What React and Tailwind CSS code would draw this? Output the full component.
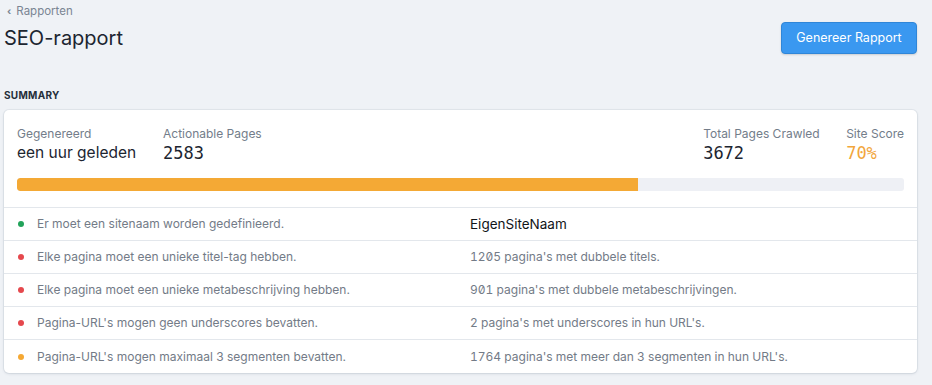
import React from "react";

const rows = [
  { dot: "bg-[#22a35a]", text: "Er moet een sitenaam worden gedefinieerd.", value: "EigenSiteNaam", dark: true },
  { dot: "bg-[#e5484d]", text: "Elke pagina moet een unieke titel-tag hebben.", value: "1205 pagina's met dubbele titels." },
  { dot: "bg-[#e5484d]", text: "Elke pagina moet een unieke metabeschrijving hebben.", value: "901 pagina's met dubbele metabeschrijvingen." },
  { dot: "bg-[#e5484d]", text: "Pagina-URL's mogen geen underscores bevatten.", value: "2 pagina's met underscores in hun URL's." },
  { dot: "bg-[#f5a833]", text: "Pagina-URL's mogen maximaal 3 segmenten bevatten.", value: "1764 pagina's met meer dan 3 segmenten in hun URL's." },
];

export default function App() {
  return (
    <div className="w-[932px] h-[385px] overflow-hidden bg-[#eff2f6] font-['Inter',sans-serif] text-[#1f2733]">
      <div className="px-[4px] pt-[3px]">
        <div className="flex items-start justify-between">
          <div>
            <div className="flex items-center gap-[5px] pl-[3px] text-[11.5px] leading-[16px] text-[#7a8593]">
              <span className="text-[10px] font-bold">‹</span>
              <span>Rapporten</span>
            </div>
            <h1 className="mt-[6px] text-[20px] leading-[26px] font-normal text-[#1c2530]">SEO-rapport</h1>
          </div>
          <button className="mt-[19px] mr-[11px] h-[32px] w-[136px] rounded-[4px] bg-[#3a98f0] border border-[#2f86d8] text-white text-[12.5px] shadow-[0_1px_2px_rgba(0,0,0,0.15)]">
            Genereer Rapport
          </button>
        </div>

        <div className="mt-[34px] text-[10px] leading-[14px] font-bold tracking-[0.03em] text-[#252e3a]">SUMMARY</div>

        <div className="mt-[8px] mr-[11px] rounded-[5px] bg-white shadow-[0_0_0_1px_rgba(40,60,90,0.06),0_1px_3px_rgba(40,60,90,0.12)]">
          <div className="px-[13px] pt-[16px] pb-[16px] border-b border-[#e3e7ec]">
            <div className="flex">
              <div className="w-[146px]">
                <div className="text-[12px] leading-[16px] text-[#737d8a]">Gegenereerd</div>
                <div className="text-[15.5px] leading-[22px] text-[#1c2530]">een uur geleden</div>
              </div>
              <div className="flex-1">
                <div className="text-[12px] leading-[16px] text-[#737d8a]">Actionable Pages</div>
                <div className="text-[17px] leading-[22px] font-['DejaVu_Sans_Mono',monospace] text-[#1c2530]">2583</div>
              </div>
              <div className="w-[143px]">
                <div className="text-[12px] leading-[16px] text-[#737d8a]">Total Pages Crawled</div>
                <div className="text-[17px] leading-[22px] font-['DejaVu_Sans_Mono',monospace] text-[#1c2530]">3672</div>
              </div>
              <div>
                <div className="text-[12px] leading-[16px] text-[#737d8a]">Site Score</div>
                <div className="text-[17px] leading-[22px] font-['DejaVu_Sans_Mono',monospace] text-[#f2a63c]">70%</div>
              </div>
            </div>
            <div className="mt-[14px] h-[13px] rounded-[3px] bg-[#eef0f5] overflow-hidden">
              <div className="h-full w-[70%] bg-[#f4a935] rounded-l-[3px]" />
            </div>
          </div>

          {rows.map((r, i) => (
            <div
              key={i}
              className={`grid grid-cols-[453px_1fr] items-center h-[33px] px-[13px] ${i < rows.length - 1 ? "border-b border-[#e3e7ec]" : ""}`}
            >
              <div className="flex items-center">
                <span className={`ml-[1px] w-[6px] h-[6px] rounded-full ${r.dot}`} />
                <span className="ml-[13px] text-[12px] text-[#737b87]">{r.text}</span>
              </div>
              <div
                className={
                  r.dark
                    ? "text-[13.5px] text-[#111418]"
                    : "text-[12px] text-[#737b87] [font-feature-settings:'zero','tnum']"
                }
              >
                {r.value}
              </div>
            </div>
          ))}
        </div>
      </div>
    </div>
  );
}
